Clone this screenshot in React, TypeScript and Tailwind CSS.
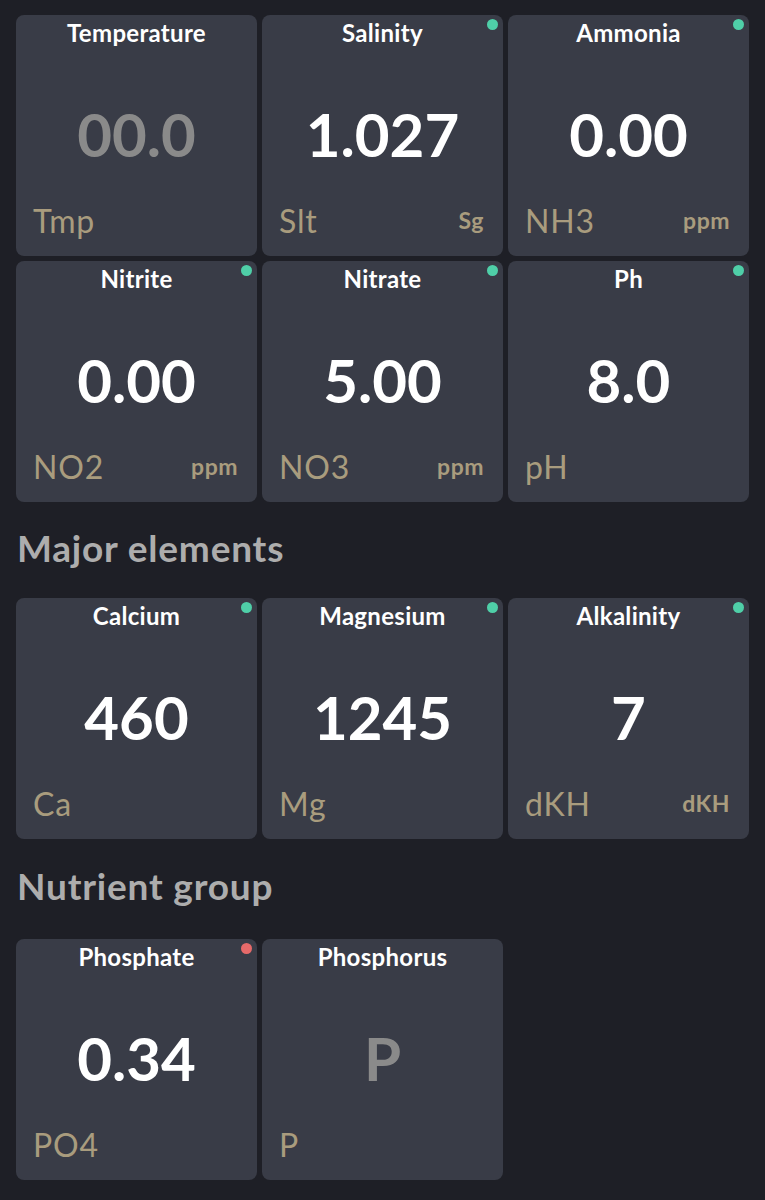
type Reading = {
  title: string
  value: string
  symbol: string
  unit?: string
  status?: "ok" | "alert"
  empty?: boolean
}

const basics: Reading[] = [
  { title: "Temperature", value: "00.0", symbol: "Tmp", empty: true },
  { title: "Salinity", value: "1.027", symbol: "Slt", unit: "Sg", status: "ok" },
  { title: "Ammonia", value: "0.00", symbol: "NH3", unit: "ppm", status: "ok" },
  { title: "Nitrite", value: "0.00", symbol: "NO2", unit: "ppm", status: "ok" },
  { title: "Nitrate", value: "5.00", symbol: "NO3", unit: "ppm", status: "ok" },
  { title: "Ph", value: "8.0", symbol: "pH", status: "ok" },
]

const majors: Reading[] = [
  { title: "Calcium", value: "460", symbol: "Ca", status: "ok" },
  { title: "Magnesium", value: "1245", symbol: "Mg", status: "ok" },
  { title: "Alkalinity", value: "7", symbol: "dKH", unit: "dKH", status: "ok" },
]

const nutrients: Reading[] = [
  { title: "Phosphate", value: "0.34", symbol: "PO4", status: "alert" },
  { title: "Phosphorus", value: "P", symbol: "P", empty: true },
]

function ReadingCard({ r }: { r: Reading }) {
  return (
    <div className="relative flex h-[241px] flex-col rounded-lg bg-[#393c47]">
      {r.status && (
        <span
          className={`absolute right-[5px] top-[4px] h-[11px] w-[11px] rounded-full ${
            r.status === "ok" ? "bg-[#4fcfa8]" : "bg-[#e66a6a]"
          }`}
        />
      )}
      <div className="flex h-[50px] justify-center pt-[4px] text-[24px] font-bold leading-[28px] tracking-[0.3px] text-white">
        {r.title}
      </div>
      <div
        className={`flex flex-1 items-center justify-center text-[60px] font-bold leading-none ${
          r.empty ? "text-[#8a8a8a]" : "text-white"
        }`}
      >
        {r.value}
      </div>
      <div className="flex h-[54px] items-end justify-between pb-[19px] pl-[17px] pr-[19px] text-[#a99c7e]">
        <span className="text-[32px] leading-[32px] tracking-[0.8px]">{r.symbol}</span>
        {r.unit && (
          <span className="mb-[6px] text-[23px] font-bold leading-[22px] tracking-[0.5px]">{r.unit}</span>
        )}
      </div>
    </div>
  )
}

export default function App() {
  return (
    <div
      className="min-h-[1200px] bg-[#1e1f26] px-4 pt-[15px]"
      style={{ fontFamily: "Lato, 'Open Sans', sans-serif" }}
    >
      <div className="grid grid-cols-3 gap-[5px]">
        {basics.map((r) => (
          <ReadingCard key={r.title} r={r} />
        ))}
      </div>

      <h2 className="mb-[28px] mt-[24px] pl-[1px] text-[37px] font-bold leading-[44px] tracking-[0.8px] text-[#adadad]">
        Major elements
      </h2>
      <div className="grid grid-cols-3 gap-[5px]">
        {majors.map((r) => (
          <ReadingCard key={r.title} r={r} />
        ))}
      </div>

      <h2 className="mb-[31px] mt-[25px] pl-[1px] text-[37px] font-bold leading-[44px] tracking-[0.8px] text-[#adadad]">
        Nutrient group
      </h2>
      <div className="grid grid-cols-3 gap-[5px]">
        {nutrients.map((r) => (
          <ReadingCard key={r.title} r={r} />
        ))}
      </div>
    </div>
  )
}
